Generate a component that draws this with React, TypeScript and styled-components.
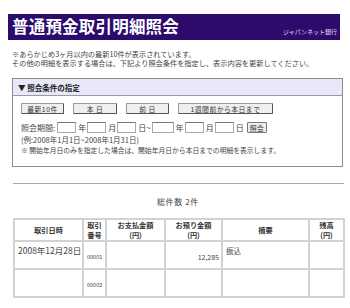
import styled, { createGlobalStyle } from "styled-components";

const GlobalStyle = createGlobalStyle`
  body {
    margin: 0;
    background: #fff;
    font-family: "Noto Sans CJK JP", "DejaVu Sans", sans-serif;
    color: #333;
  }
`;

const Page = styled.div`
  width: 350px;
  height: 308px;
  padding: 14px 0 0 8px;
  box-sizing: border-box;
  overflow: hidden;
`;

const TitleBar = styled.div`
  width: 332px;
  height: 26px;
  background: #2c0b6c;
  display: flex;
  align-items: flex-end;
  justify-content: space-between;
  padding: 0 3px 4px 4px;
  box-sizing: border-box;
`;

const Title = styled.h1`
  margin: 0;
  font-size: 16.5px;
  line-height: 20px;
  font-weight: 700;
  color: #fff;
  letter-spacing: 0.2px;
`;

const BankName = styled.span`
  font-size: 6px;
  line-height: 8px;
  color: #e4dcf4;
`;

const Notes = styled.p`
  margin: 10px 0 0 4px;
  font-size: 7.2px;
  line-height: 9px;
  color: #444;
`;

const Box = styled.section`
  margin: 10px 0 0 4px;
  width: 331px;
  height: 89px;
  border: 1px solid #8c8c8c;
  box-sizing: border-box;
`;

const BoxHead = styled.div`
  height: 16px;
  background: #e8e8fa;
  border-bottom: 1px solid #9a9a9a;
  display: flex;
  align-items: center;
  padding-left: 5px;
  font-size: 7.5px;
  font-weight: 700;
  color: #222;
`;

const BoxBody = styled.div`
  padding: 7px 0 0 8px;
  display: flex;
  flex-direction: column;
`;

const ButtonRow = styled.div`
  display: flex;
  gap: 9px;
  height: 11px;
`;

const Btn = styled.button<{ $w: number }>`
  width: ${(p) => p.$w}px;
  height: 11px;
  padding: 0;
  margin: 0;
  font-family: inherit;
  font-size: 6.8px;
  line-height: 8px;
  color: #333;
  background: #efefef;
  border: 1px solid #9a9a9a;
  border-right-color: #555;
  border-bottom-color: #555;
  border-radius: 1px;
  letter-spacing: 0.5px;
`;

const DateRow = styled.div`
  margin-top: 8px;
  display: flex;
  align-items: center;
  height: 11px;
  font-size: 8px;
  color: #444;
`;

const Label = styled.span`
  margin-right: 2px;
`;

const Field = styled.span<{ $w?: number }>`
  display: inline-block;
  width: ${(p) => p.$w ?? 19}px;
  height: 11px;
  border: 1px solid #a8a8a8;
  border-top-color: #777;
  box-sizing: border-box;
  background: #fff;
  margin-right: 2px;
`;

const Unit = styled.span`
  margin-right: 1px;
`;

const SmallBtn = styled.button`
  height: 11px;
  padding: 0 2px;
  margin: 0 0 0 2px;
  font-family: inherit;
  font-size: 7px;
  line-height: 8px;
  color: #333;
  background: #eee;
  border: 1px solid #777;
  border-radius: 1px;
`;

const Hint = styled.div<{ $mt: number; $size: number }>`
  margin-top: ${(p) => p.$mt}px;
  font-size: ${(p) => p.$size}px;
  line-height: 9px;
  color: #444;
`;

const Rule = styled.hr`
  margin: 16px 0 0 5px;
  width: 331px;
  border: none;
  border-top: 1px solid #a9a9a9;
`;

const Count = styled.div`
  margin-top: 13px;
  padding-left: 149px;
  font-size: 8px;
  line-height: 10px;
  letter-spacing: 0.6px;
  color: #444;
`;

const Table = styled.table`
  margin: 11px 0 0 5px;
  width: 330px;
  border-collapse: collapse;
  table-layout: fixed;
  border: 1px solid #c4c4c4;
`;

const Th = styled.th`
  height: 20px;
  padding: 0;
  border: 2px solid #d2d2d2;
  font-size: 7.2px;
  line-height: 10px;
  font-weight: 700;
  color: #333;
  text-align: center;
  vertical-align: middle;
  white-space: nowrap;
`;

const Td = styled.td<{ $align?: string; $valign?: string; $size?: number }>`
  height: 28px;
  padding: 4px 2px 0 3px;
  box-sizing: border-box;
  border: 2px solid #d2d2d2;
  font-size: ${(p) => p.$size ?? 7.5}px;
  line-height: 9px;
  color: #444;
  text-align: ${(p) => p.$align ?? "left"};
  vertical-align: ${(p) => p.$valign ?? "top"};
  overflow: hidden;
  white-space: nowrap;
`;

const widths = [69, 23, 59, 57, 87, 35];

const rows = [
  { date: "2008年12月28日", no: "00001", pay: "", deposit: "12,285", memo: "振込", bal: "" },
  { date: "", no: "00002", pay: "", deposit: "", memo: "", bal: "" },
];

export default function App() {
  return (
    <Page>
      <GlobalStyle />
      <TitleBar>
        <Title>普通預金取引明細照会</Title>
        <BankName>ジャパンネット銀行</BankName>
      </TitleBar>
      <Notes>
        ※あらかじめ3ヶ月以内の最新10件が表示されています。
        <br />
        その他の明細を表示する場合は、下記より照会条件を指定し、表示内容を更新してください。
      </Notes>
      <Box>
        <BoxHead>▼ 照会条件の指定</BoxHead>
        <BoxBody>
          <ButtonRow>
            <Btn $w={43}>最新10件</Btn>
            <Btn $w={44}>本 日</Btn>
            <Btn $w={43}>前 日</Btn>
            <Btn $w={95}>1週間前から本日まで</Btn>
          </ButtonRow>
          <DateRow>
            <Label>照会期間:</Label>
            <Field />
            <Unit>年</Unit>
            <Field />
            <Unit>月</Unit>
            <Field />
            <Unit>日~</Unit>
            <Field $w={22} />
            <Unit>年</Unit>
            <Field />
            <Unit>月</Unit>
            <Field />
            <Unit>日</Unit>
            <SmallBtn>照会</SmallBtn>
          </DateRow>
          <Hint $mt={2} $size={7.5}>
            (例:2008年1月1日~2008年1月31日)
          </Hint>
          <Hint $mt={2} $size={6.8}>
            ※ 開始年月日のみを指定した場合は、開始年月日から本日までの明細を表示します。
          </Hint>
        </BoxBody>
      </Box>
      <Rule />
      <Count>総件数 2件</Count>
      <Table>
        <colgroup>
          {widths.map((w, i) => (
            <col key={i} style={{ width: w }} />
          ))}
        </colgroup>
        <thead>
          <tr>
            <Th>取引日時</Th>
            <Th>
              取引
              <br />
              番号
            </Th>
            <Th>
              お支払金額
              <br />
              (円)
            </Th>
            <Th>
              お預り金額
              <br />
              (円)
            </Th>
            <Th>摘要</Th>
            <Th>
              残高
              <br />
              (円)
            </Th>
          </tr>
        </thead>
        <tbody>
          {rows.map((r) => (
            <tr key={r.no}>
              <Td $size={8.5}>{r.date}</Td>
              <Td $valign="middle" $size={5.5}>
                {r.no}
              </Td>
              <Td $align="right">{r.pay}</Td>
              <Td $align="right" $valign="middle" $size={7}>
                {r.deposit}
              </Td>
              <Td>{r.memo}</Td>
              <Td>{r.bal}</Td>
            </tr>
          ))}
        </tbody>
      </Table>
    </Page>
  );
}
